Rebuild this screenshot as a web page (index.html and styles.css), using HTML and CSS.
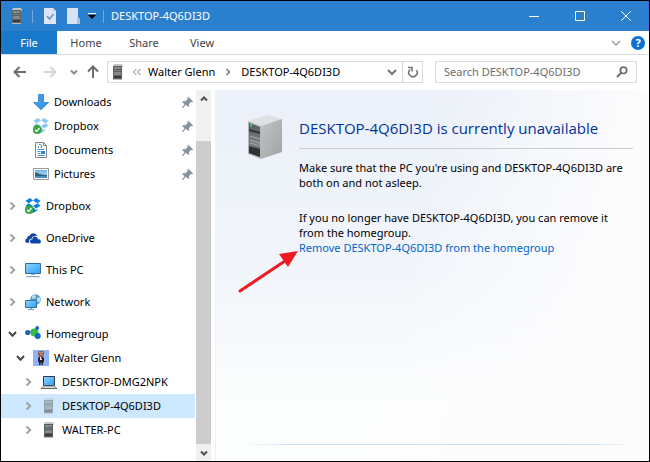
FILE: index.html
```html
<!DOCTYPE html>
<html lang="en">
<head>
<meta charset="utf-8">
<title>DESKTOP-4Q6DI3D</title>
<link rel="stylesheet" href="styles.css">
</head>
<body>
<svg class="sprite" aria-hidden="true">
  <defs>
    <linearGradient id="g-screen" x1="0" y1="0" x2="1" y2="1"><stop offset="0" stop-color="#8fd5ff"/><stop offset="1" stop-color="#2e9ff5"/></linearGradient>
    <linearGradient id="g-side" x1="0" y1="0" x2="1" y2="1"><stop offset="0" stop-color="#c2c3c5"/><stop offset="1" stop-color="#a2a3a5"/></linearGradient>
    <linearGradient id="g-face" x1="0" y1="0" x2="0" y2="1"><stop offset="0" stop-color="#55585b"/><stop offset=".6" stop-color="#7e8184"/><stop offset="1" stop-color="#4c4e50"/></linearGradient>
    <linearGradient id="g-pic" x1="0" y1="0" x2="0" y2="1"><stop offset="0" stop-color="#6db4e8"/><stop offset="1" stop-color="#d9edf8"/></linearGradient>
  </defs>
  <symbol id="server" viewBox="0 0 16 16">
    <path fill="#c4c4c4" d="M4 0h8l1 2v1H3V2z"/>
    <path fill="#5d6063" d="M3 2h9v14H3z"/>
    <path fill="#85888b" d="M4 3h7v2H4zM4 8h7v3H4z"/>
    <path fill="#75787b" d="M4 6h7v1H4z"/>
    <path fill="#3a3c3e" d="M4 12h7v2H4z"/>
    <path fill="#b9b9b9" d="M3 15h9v1H3z"/>
    <path fill="#4ee05c" d="M5 4h1v1H5z"/>
  </symbol>
  <symbol id="check-doc" viewBox="0 0 16 16">
    <path fill="#dce6f7" d="M2 0h9l3 3v13H2z"/><path fill="#b9cdea" d="M11 0v3h3z"/>
    <path fill="none" stroke="#6f93bd" stroke-width="1.500" d="M5 8l2.500 3L11.500 6"/>
  </symbol>
  <symbol id="blank-doc" viewBox="0 0 16 16">
    <path fill="#d7e2f6" d="M1 0h11v10l2 1v5H1z"/><path fill="#a9c1e5" d="M11 10h1v-1l2 2v5h-3z"/>
  </symbol>
  <symbol id="right" viewBox="0 0 16 16"><path fill="none" stroke="#a3a3a3" stroke-width="2" d="M5.500 4.500L9.200 8 5.500 11.500"/></symbol>
  <symbol id="down" viewBox="0 0 16 16"><path fill="none" stroke="#494949" stroke-width="2" d="M4 6l3.500 3.700L11 6"/></symbol>
  <symbol id="pin" viewBox="0 0 16 16"><path fill="#8793a0" d="M9.500 2L15 7.300l-1 .9-1.400-.3-2.300 2.300.1 2.700-1 .9-2.600-2.600L3 15l-.9-.8 3.100-3.600L2.500 8l1-1 2.700.1L8.800 4.500l-.4-1.600z"/></symbol>
  <symbol id="download" viewBox="0 0 16 16"><path fill="#3d9ae8" stroke="#2d83cf" stroke-width=".8" d="M5.500.5h5v8h5L8 15.700.5 8.500h5z"/></symbol>
  <symbol id="boxes" viewBox="0 0 16 16">
    <path d="M5 0l3 2.400L3.500 5.200.5 2.800zM11 0l4.500 2.800-3 2.400L8 2.400zM.5 7.700l3-2.400L8 8.100 5 10.500zM12.500 5.300l3 2.400L11 10.500 8 8.100zM3.500 11l1.600 1L8 9.200 11 12l1.500-1v1.200L8 15l-4.500-2.800z"/>
  </symbol>
  <symbol id="tick" viewBox="0 0 16 16">
    <circle cx="4.200" cy="11.700" r="4.100" fill="#35a946" stroke="#1e8a31" stroke-width=".5"/><path fill="none" stroke="#fff" stroke-width="1.300" d="M2 11.600l1.700 1.800L6.500 10"/>
  </symbol>
  <symbol id="document" viewBox="0 0 16 16">
    <path fill="#fff" stroke="#858585" d="M2.500.5h8l3 3v12h-11z"/><path fill="none" stroke="#858585" d="M10.500.5v3h3"/>
    <path fill="none" stroke="#4097df" d="M6 2.500h2M5.500 4v2M8.500 3v3M4.500 7.500h7M4.500 9.500h3M4.500 11.500h3M4.500 13.500h7"/><path fill="#3286cf" d="M8 9h4v3H8z"/>
  </symbol>
  <symbol id="picture" viewBox="0 0 16 16">
    <path fill="#fff" stroke="#9a9a9a" d="M.5 2.500h15v11H.5z"/><path fill="url(#g-pic)" d="M2 4h12v8H2z"/><path fill="#2c647c" d="M2 6c3 1 4 2.500 12 3v1H2z"/><path fill="#4b8fb8" d="M2 10h12v2H2z"/>
  </symbol>
  <symbol id="cloud" viewBox="0 0 16 16">
    <path fill="#0d47a8" d="M.2 11.200c0-1.500.8-2.300 2-2.600C2 6.200 3.600 5.500 4.800 5.700 5.800 3.200 8.700 2.700 10.500 4c1 .6 1.400 1.500 1.500 2-2.800-.7-4.700.6-5.300 2.500-2.200.2-3 2-2.500 4.300H2c-1.200 0-1.800-.8-1.800-1.600z"/>
    <path fill="#0d47a8" d="M5 11.500c0-1.400 1-2.300 2.400-2.300C7.500 7 9.200 6.200 10.700 6.700c1.200.3 1.900 1.200 2 2.300 2 0 3.200 1 3.200 2.400 0 1.300-.9 2.200-2.300 2.200H7.200C5.800 13.600 5 12.700 5 11.500z"/>
  </symbol>
  <symbol id="monitor" viewBox="0 0 16 16">
    <path fill="url(#g-screen)" stroke="#356f9f" d="M.5 1.500h15v10H.5z"/><path fill="#9ebad0" d="M6 12h4v1H6z"/><path fill="#8aa9c0" d="M2 14h12l2 1.200H0z"/>
  </symbol>
  <symbol id="network" viewBox="0 0 16 16">
    <circle cx="10.500" cy="5.500" r="5.300" fill="#5b9cc4"/><path fill="#b7dcec" d="M7 2l3-1 1 2-2 2-2-.5zM12 4l3-1 .5 3-2 3-1.500-2z"/>
    <path fill="url(#g-screen)" stroke="#2e74a8" d="M.5 6.500h11v7H.5z"/><path fill="#81a6c2" d="M3 15h6v1H3zM5 14h2v1H5z"/>
  </symbol>
  <symbol id="homegroup" viewBox="0 0 16 16">
    <path stroke="#8cc0e0" d="M3 6l7 0 2-4M10 6l3 6"/><circle cx="9.500" cy="6.500" r="4" fill="#35bd4b"/>
    <circle cx="2.700" cy="6.500" r="2.600" fill="#1769b4"/><circle cx="12.200" cy="2" r="1.900" fill="#1769b4"/><circle cx="12.700" cy="10" r="3" fill="#1769b4"/>
  </symbol>
  <symbol id="user" viewBox="0 0 16 16">
    <path fill="#8fb2fb" d="M0 0h16v16H0z"/><path fill="#8d5f4e" d="M6 1h4l1 1v3l-1 2H6L5 5V2z"/><path fill="#c79980" d="M6 2h4v1H6zM7 4h3v1H7z"/>
    <path fill="#29232a" d="M6 7h4l1 1v4h-1v3H8.500v-2h-1v2H6v-3H5V8z"/><path fill="#e6e6ea" d="M7 7h2v3H7z"/><path fill="#a3443d" d="M8 7h1v2H8z"/>
  </symbol>
  <symbol id="laptop" viewBox="0 0 16 16">
    <path fill="url(#g-screen)" stroke="#303940" d="M2.500 2.500h11v9h-11z"/><path fill="#d5d9dc" stroke="#747b80" stroke-width=".7" d="M2 12h12l1.700 2.500H.3z"/><path fill="#646b70" d="M0 14h16v1H0z"/>
  </symbol>
</svg>

<div class="window">
  <header class="titlebar">
    <svg class="icon"><use href="#server"/></svg>
    <span class="sep"></span>
    <button class="quick" aria-label="Properties"><svg class="icon"><use href="#check-doc"/></svg></button>
    <button class="quick" aria-label="New folder"><svg class="icon"><use href="#blank-doc"/></svg></button>
    <button class="more" aria-label="Customize toolbar"><svg viewBox="0 0 8 8"><path fill="#fff" d="M0 1h8v1H0z"/><path d="M0 3h8L4 7z" fill="#000"/></svg></button>
    <span class="sep"></span>
    <h1 class="caption">DESKTOP-4Q6DI3D</h1>
    <div class="controls">
      <button aria-label="Minimize"><svg viewBox="0 0 10 10"><path d="M0 5.500h10"/></svg></button>
      <button aria-label="Maximize"><svg viewBox="0 0 10 10"><path d="M.5.5h9v9h-9z"/></svg></button>
      <button aria-label="Close"><svg viewBox="0 0 10 10"><path d="M.3.3l9.400 9.400M9.700.3L.3 9.700"/></svg></button>
    </div>
  </header>

  <nav class="ribbon" aria-label="Ribbon">
    <button class="file">File</button>
    <button>Home</button>
    <button>Share</button>
    <button>View</button>
    <div class="ribbon-end">
      <button aria-label="Expand ribbon"><svg viewBox="0 0 10 10"><path fill="none" stroke="#a0a0a0" stroke-width="1.500" d="M1 3l4 4 4-4"/></svg></button>
      <button class="help" aria-label="Help">?</button>
    </div>
  </nav>

  <div class="toolbar">
    <div class="history">
      <button aria-label="Back"><svg class="icon"><path fill="none" stroke="#6d6d6d" stroke-width="2" d="M14 8H3M7.500 3L2.500 8l5 5"/></svg></button>
      <button aria-label="Forward"><svg class="icon"><path fill="none" stroke="#d6d6d6" stroke-width="2" d="M2 8h11M8.500 3l5 5-5 5"/></svg></button>
      <button class="recent" aria-label="Recent locations"><svg viewBox="0 0 8 8"><path fill="none" stroke="#8c8c8c" stroke-width="2" d="M1 2.500l3 3 3-3"/></svg></button>
      <button aria-label="Up"><svg class="icon"><path fill="none" stroke="#6d6d6d" stroke-width="2" d="M7 14V3M2 7.500l5-5 5 5"/></svg></button>
    </div>
    <div class="address">
      <svg class="icon"><use href="#server"/></svg>
      <svg class="crumb-sep" viewBox="0 0 8 8"><path fill="none" stroke="#777" d="M3.500 1l-3 3 3 3M7.500 1l-3 3 3 3"/></svg>
      <a href="#walter">Walter Glenn</a>
      <svg class="crumb-sep" viewBox="0 0 8 8"><path fill="none" stroke="#777" stroke-width="1.500" d="M2.500 1l3 3-3 3"/></svg>
      <a href="#desktop">DESKTOP-4Q6DI3D</a>
      <button class="drop" aria-label="Previous locations"><svg viewBox="0 0 10 10"><path fill="none" stroke="#777" stroke-width="2" d="M1 3l4 4 4-4"/></svg></button>
      <button class="refresh" aria-label="Refresh"><svg viewBox="0 0 12 12"><path fill="none" stroke="#757575" stroke-width="1.600" d="M3 3.500a4.200 4.200 0 1 0 6.500.6M1 1.500h4v4"/></svg></button>
    </div>
    <label class="search">
      <input type="text" placeholder="Search DESKTOP-4Q6DI3D" aria-label="Search DESKTOP-4Q6DI3D">
      <svg viewBox="0 0 12 12"><circle cx="7.500" cy="4.300" r="3.200" fill="none" stroke="#6c6c6c" stroke-width="1.700"/><path stroke="#6c6c6c" stroke-width="2" d="M5.200 6.800L1 11"/></svg>
    </label>
  </div>

  <div class="body">
    <nav class="tree" aria-label="Folders">
      <ul>
        <li class="row depth-1"><svg class="icon"><use href="#download"/></svg><a href="#downloads">Downloads</a><svg class="icon pin"><use href="#pin"/></svg></li>
        <li class="row depth-1"><svg class="icon"><use href="#boxes" fill="#8cc7f4"/><use href="#tick"/></svg><a href="#qdropbox">Dropbox</a><svg class="icon pin"><use href="#pin"/></svg></li>
        <li class="row depth-1"><svg class="icon"><use href="#document"/></svg><a href="#documents">Documents</a><svg class="icon pin"><use href="#pin"/></svg></li>
        <li class="row depth-1"><svg class="icon"><use href="#picture"/></svg><a href="#pictures">Pictures</a><svg class="icon pin"><use href="#pin"/></svg></li>
      </ul>
      <ul><li class="row"><button aria-label="Expand Dropbox"><svg class="icon"><use href="#right"/></svg></button><svg class="icon"><use href="#boxes" fill="#087ee6"/><use href="#tick"/></svg><a href="#dropbox">Dropbox</a></li></ul>
      <ul><li class="row"><button aria-label="Expand OneDrive"><svg class="icon"><use href="#right"/></svg></button><svg class="icon"><use href="#cloud"/></svg><a href="#onedrive">OneDrive</a></li></ul>
      <ul><li class="row"><button aria-label="Expand This PC"><svg class="icon"><use href="#right"/></svg></button><svg class="icon"><use href="#monitor"/></svg><a href="#pc">This PC</a></li></ul>
      <ul><li class="row"><button aria-label="Expand Network"><svg class="icon"><use href="#right"/></svg></button><svg class="icon"><use href="#network"/></svg><a href="#network-places">Network</a></li></ul>
      <ul>
        <li class="row"><button aria-label="Collapse Homegroup"><svg class="icon"><use href="#down"/></svg></button><svg class="icon"><use href="#homegroup"/></svg><a href="#group">Homegroup</a></li>
        <li class="row depth-1"><button aria-label="Collapse Walter Glenn"><svg class="icon"><use href="#down"/></svg></button><svg class="icon"><use href="#user"/></svg><a href="#walter">Walter Glenn</a></li>
        <li class="row depth-2"><button aria-label="Expand DESKTOP-DMG2NPK"><svg class="icon"><use href="#right"/></svg></button><svg class="icon"><use href="#laptop"/></svg><a href="#dmg">DESKTOP-DMG2NPK</a></li>
        <li class="row depth-2 selected"><button aria-label="Expand DESKTOP-4Q6DI3D"><svg class="icon"><use href="#right"/></svg></button><svg class="icon offline"><use href="#server"/></svg><a href="#desktop">DESKTOP-4Q6DI3D</a></li>
        <li class="row depth-2"><button aria-label="Expand WALTER-PC"><svg class="icon"><use href="#right"/></svg></button><svg class="icon"><use href="#server"/></svg><a href="#walter-pc">WALTER-PC</a></li>
      </ul>
    </nav>
    <div class="scrollbar">
      <button aria-label="Scroll up"><svg viewBox="0 0 8 8"><path fill="none" stroke="#505050" stroke-width="2" d="M1 5.500l3-3 3 3"/></svg></button>
      <div class="track"><div class="thumb"></div></div>
      <button aria-label="Scroll down"><svg viewBox="0 0 8 8"><path fill="none" stroke="#505050" stroke-width="2" d="M1 2.500l3 3 3-3"/></svg></button>
    </div>

    <main class="content">
      <section class="notice">
        <svg class="tower" viewBox="0 0 36 46">
          <path fill="#dfe0e1" d="M1 7L21 1l14 4-20 7z"/>
          <path fill="url(#g-side)" d="M14 12l21-7v33l-21 7z"/>
          <path fill="#b5b7b9" d="M1 7l13 5v33L1 40z"/>
          <path fill="url(#g-face)" d="M2 9l11 4v30L2 39z"/>
          <path fill="#303234" d="M2 15l11 3v2L2 17zM2 32l11 3v8L2 39z"/>
          <path fill="none" stroke="#b2b4b6" stroke-width=".8" d="M3 22l10 3M3 26l10 3M3 29l10 3"/>
          <path fill="#39e451" d="M3 10l2 .8v2l-2-.8z"/>
        </svg>
        <div class="message">
          <h2>DESKTOP-4Q6DI3D is currently unavailable</h2>
          <p>Make sure that the PC you're using and DESKTOP-4Q6DI3D are both on and not asleep.</p>
          <p>If you no longer have DESKTOP-4Q6DI3D, you can remove it from the homegroup.</p>
          <a class="remove" href="#remove">Remove DESKTOP-4Q6DI3D from the homegroup
            <svg class="pointer" viewBox="0 0 62 44" aria-hidden="true"><path stroke="#ed1c24" stroke-width="3" stroke-linecap="round" d="M3 41L48 11"/><path fill="#ed1c24" d="M61 1L42 4l9 13z"/></svg>
          </a>
        </div>
      </section>
      <div class="footer"></div>
    </main>
  </div>
</div>
</body>
</html>
```

FILE: styles.css
```css
* { box-sizing: border-box; }

body {
  margin: 0;
  font: 11px/16px "Noto Sans", "Open Sans", sans-serif;
  color: #000;
}

button {
  display: flex;
  align-items: center;
  justify-content: center;
  padding: 0;
  border: 0;
  background: none;
  font: inherit;
  color: inherit;
}

a { color: inherit; text-decoration: none; }
ul { margin: 0; padding: 0; list-style: none; }
svg { display: block; flex: none; }

.sprite { position: absolute; width: 0; height: 0; }
.icon { width: 16px; height: 16px; }

.window {
  display: flex;
  flex-direction: column;
  min-height: 100vh;
  border: 1px solid #000;
  background: #fff;
}

/* Title bar */
.titlebar {
  display: flex;
  align-items: center;
  height: 30px;
  padding-left: 8px;
  background: #2a7fce;
  color: #fff;
}
.sep { width: 1px; height: 13px; margin: 0 7px; background: #79a9dc; }
.quick { margin-left: 2px; margin-right: 6px; }
.more svg { width: 8px; height: 8px; }
.caption { flex: 1; margin: 0; font-size: 11px; font-weight: 400; }
.controls { display: flex; align-self: stretch; }
.controls button { width: 46px; }
.controls svg { width: 10px; height: 10px; fill: none; stroke: #fff; }

/* Ribbon */
.ribbon {
  display: flex;
  height: 24px;
  border-bottom: 1px solid #dadbdc;
  color: #444;
}
.ribbon > button { width: 58px; }
.ribbon .file { width: 56px; background: #1979ca; color: #fff; }
.ribbon-end { display: flex; align-items: center; gap: 10px; margin-left: auto; padding-right: 4px; }
.ribbon-end svg { width: 10px; height: 10px; }
.help {
  width: 14px;
  height: 14px;
  border-radius: 50%;
  background: #0b72d0;
  color: #fff;
  font-weight: 700;
}

/* Address toolbar */
.toolbar {
  display: flex;
  align-items: center;
  gap: 12px;
  height: 35px;
  padding: 0 12px 1px 11px;
}
.history { display: flex; gap: 14px; margin-right: -8px; }
.history .recent { width: 8px; margin: 0 -6px 0 -2px; }
.history button:last-child { margin-right: 1px; }
.recent svg, .crumb-sep { width: 8px; height: 8px; }
.address, .search {
  display: flex;
  align-items: center;
  height: 22px;
  border: 1px solid #d9d9d9;
}
.address { flex: 1; gap: 7px; padding-left: 2px; }
.address a + .crumb-sep { margin: 0 2px; }
.address .drop { margin-left: auto; }
.address .drop svg { width: 10px; height: 10px; }
.refresh { align-self: stretch; width: 20px; margin-left: -2px; border-left: 1px solid #d9d9d9; }
.refresh svg, .search svg { width: 12px; height: 12px; }
.search { width: 202px; padding: 0 8px; }
.search input {
  flex: 1;
  min-width: 0;
  padding: 0;
  border: 0;
  outline: 0;
  background: none;
  font: inherit;
}
.search input::placeholder { color: #6d6d6d; opacity: 1; }

/* Body */
.body { display: flex; flex: 1; }
.tree { display: flex; flex-direction: column; gap: 8px; width: 195px; padding-right: 1px; }
.row { display: flex; align-items: center; height: 24px; padding-left: 4px; }
.row button + .icon { margin-left: 4px; }
.row a { margin-left: 5px; white-space: nowrap; }
.depth-1 { padding-left: 12px; }
.depth-1 > .icon:first-child { margin-left: 20px; }
.depth-2 { padding-left: 20px; }
.selected { background: #cde8ff; }
.offline { opacity: .5; }
.row .pin { width: 14px; height: 14px; margin-left: auto; margin-right: 1px; }

.scrollbar {
  display: flex;
  flex-direction: column;
  width: 15px;
  background: #f0f0f0;
}
.scrollbar button { height: 17px; }
.scrollbar svg { width: 8px; height: 8px; }
.track { display: flex; flex: 1; flex-direction: column; justify-content: flex-end; }
.thumb { height: 90%; background: #cdcdcd; }

.content {
  display: flex;
  flex: 1;
  flex-direction: column;
  min-width: 0;
  margin-left: 4px;
  padding: 24px 16px 0 31px;
  border-left: 1px solid #f0f0f0;
  background:
    linear-gradient(100deg, transparent 45%, #fcfcfd 85%),
    linear-gradient(#ebf0f9, #f2f6fb 50%, #fcfdfd 85%);
}
.notice { display: flex; gap: 16px; }
.tower { width: 36px; height: 46px; }
.message { flex: 1; min-width: 0; line-height: 15px; }
.message h2 {
  margin: 0 0 11px;
  padding: 4px 0 9px;
  border-bottom: 1px solid #c9cbce;
  color: #003399;
  font: 400 15px/21px "Open Sans", "Noto Sans", sans-serif;
}
.message p { margin: 0 0 20px; }
.message p + p { margin: 0; }
.remove { position: relative; display: block; color: #0066cc; }
.pointer { position: absolute; top: 10px; right: 100%; width: 62px; height: 44px; }
.footer {
  height: 17px;
  margin-top: auto;
  border-top: 1px solid;
  border-image: linear-gradient(90deg, transparent, #cfe2f6 10%, #cfe2f6 90%, transparent) 1;
}
```
